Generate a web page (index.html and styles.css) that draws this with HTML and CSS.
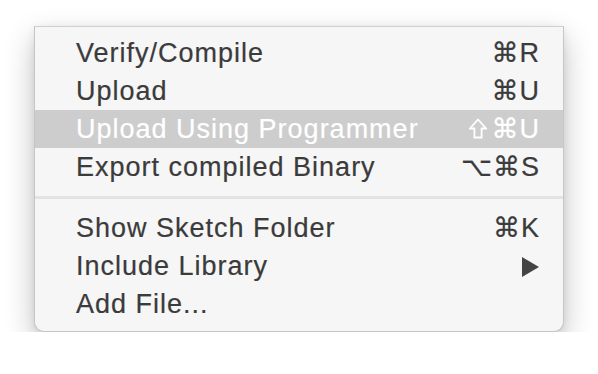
FILE: index.html
```html
<!DOCTYPE html>
<html lang="en">
  <head>
    <meta charset="UTF-8" />
    <title>Sketch Menu</title>
    <link rel="stylesheet" href="styles.css">
  </head>
  <body>
    <!-- SKETCH MENU -->
    <div class="menu">
      <div class="menu-item">
        <span class="label">Verify/Compile</span>
        <span class="shortcut">⌘R</span>
      </div>
      <div class="menu-item">
        <span class="label">Upload</span>
        <span class="shortcut">⌘U</span>
      </div>
      <div class="menu-item active">
        <span class="label">Upload Using Programmer</span>
        <span class="shortcut">
          <svg class="shift-icon" viewBox="0 0 18 21" width="18" height="21">
            <path d="M9 1.5 L17 10.5 H12.6 V19.5 H5.4 V10.5 H1 Z" />
          </svg>⌘U
        </span>
      </div>
      <div class="menu-item">
        <span class="label">Export compiled Binary</span>
        <span class="shortcut">⌥⌘S</span>
      </div>

      <div class="separator"></div>

      <div class="menu-item">
        <span class="label">Show Sketch Folder</span>
        <span class="shortcut">⌘K</span>
      </div>
      <div class="menu-item">
        <span class="label">Include Library</span>
        <span class="submenu"></span>
      </div>
      <div class="menu-item">
        <span class="label">Add File...</span>
      </div>
    </div>
  </body>
</html>
```

FILE: styles.css
```css
* {
  box-sizing: border-box;
}

body {
  margin: 0;
  padding: 26px 0 0 34px;
  background: #ffffff;
  font-family: "Liberation Sans", Arial, sans-serif;
  -webkit-font-smoothing: antialiased;
}

/* Menu panel */
.menu {
  width: 530px;
  height: 306px;
  background: #f6f6f6;
  border: 1px solid #c6c6c6;
  border-top-color: #d0d0d0;
  border-radius: 0 0 10px 10px;
  padding: 7px 0 0;
  box-shadow: 0 12px 30px rgba(0, 0, 0, 0.24), 0 2px 8px rgba(0, 0, 0, 0.08);
}

.menu-item {
  height: 38px;
  display: flex;
  align-items: center;
  justify-content: space-between;
  padding: 0 24px 0 41px;
  font-size: 27px;
  letter-spacing: 1px;
  color: #3b3b3b;
  -webkit-text-stroke: 0.2px currentColor;
}

.menu-item.active {
  background: #cdcdcd;
  color: #ffffff;
}

.shortcut {
  display: flex;
  align-items: center;
  font-family: "Liberation Sans", "DejaVu Sans", sans-serif;
  font-size: 27px;
  letter-spacing: 1px;
  margin-right: -1px;
}

.shift-icon {
  margin-right: 5px;
  margin-top: -1px;
}

.shift-icon path {
  fill: none;
  stroke: currentColor;
  stroke-width: 1.8;
  stroke-linejoin: miter;
}

/* submenu arrow */
.submenu {
  width: 0;
  height: 0;
  border-top: 10px solid transparent;
  border-bottom: 10px solid transparent;
  border-left: 17px solid #444;
  margin-top: 1px;
}

.separator {
  height: 3px;
  background: #e3e3e3;
  margin: 10px 0 10px;
}
```
